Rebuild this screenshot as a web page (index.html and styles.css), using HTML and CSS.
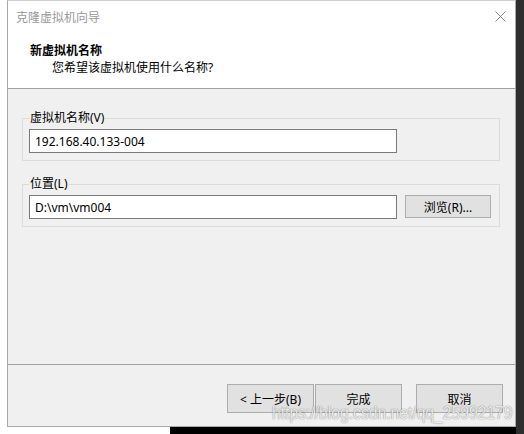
FILE: index.html
```html
<!DOCTYPE html>
<html lang="zh-CN">
<head>
    <meta charset="UTF-8">
    <meta name="viewport" content="width=device-width, initial-scale=1.0">
    <title>克隆虚拟机向导</title>
    <link rel="stylesheet" href="styles.css">
</head>
<body>
    <div class="desktop">
        <div class="edge-left"></div>
        <div class="wizard">
            <div class="titlebar">
                <span class="caption">克隆虚拟机向导</span>
                <span class="close">
                    <svg width="11" height="11" viewBox="0 0 11 11">
                        <path d="M0.5 0.5 L10.5 10.5 M10.5 0.5 L0.5 10.5" stroke="#8a8a8a" stroke-width="1" fill="none"/>
                    </svg>
                </span>
            </div>
            <div class="header">
                <div class="header-title">新虚拟机名称</div>
                <div class="header-sub">您希望该虚拟机使用什么名称?</div>
            </div>
            <div class="content">
                <fieldset class="group">
                    <legend>虚拟机名称(V)</legend>
                    <div class="row">
                        <input type="text" class="field" value="192.168.40.133-004">
                    </div>
                </fieldset>
                <fieldset class="group">
                    <legend>位置(L)</legend>
                    <div class="row">
                        <input type="text" class="field" value="D:\vm\vm004">
                        <button class="btn browse">浏览(R)...</button>
                    </div>
                </fieldset>
            </div>
            <div class="footer">
                <button class="btn nav">&lt; 上一步(B)</button>
                <button class="btn nav">完成</button>
                <button class="btn nav cancel">取消</button>
            </div>
        </div>
        <div class="edge-right"></div>
        <div class="edge-bottom"><span class="taskbar"></span></div>
        <div class="watermark">https://blog.csdn.net/qq_25992179</div>
    </div>
</body>
</html>
```

FILE: styles.css
```css
body {
    margin: 0;
    background-color: #fff;
    font-family: "Noto Sans", "Noto Sans CJK SC", sans-serif;
    font-size: 12px;
    color: #000;
}

.desktop {
    position: relative;
    display: grid;
    grid-template-columns: 7px 509px 8px;
    grid-template-rows: 427px 7px;
    width: 524px;
    height: 434px;
    overflow: hidden;
}

.edge-left {
    background-color: #fff;
}

.edge-right {
    grid-row: 1 / span 2;
    grid-column: 3;
    background-color: #2e2e2e;
}

.edge-bottom {
    grid-column: 1 / span 2;
    display: flex;
    background-color: #fff;
}

.taskbar {
    margin-left: 170px;
    flex: 1;
    background-color: #000;
}

/* wizard window */
.wizard {
    display: flex;
    flex-direction: column;
    border: 1px solid #a9a9a9;
    border-top-color: #d0d0d0;
    background-color: #f0f0f0;
}

.titlebar {
    display: flex;
    justify-content: space-between;
    align-items: center;
    height: 30px;
    padding: 0 8px 0 8px;
    background-color: #fff;
}

.caption {
    color: #999;
    padding-top: 1px;
}

.close {
    display: flex;
    margin-right: 1px;
    margin-top: 1px;
}

.header {
    height: 57px;
    padding-left: 22px;
    background-color: #fff;
    border-bottom: 1px solid #a0a0a0;
}

.header-title {
    margin-top: 11px;
    font-weight: bold;
    line-height: 17px;
}

.header-sub {
    padding-left: 22px;
    line-height: 17px;
}

.content {
    flex: 1;
    padding: 21px 15px 0 14px;
    border-bottom: 1px solid #a0a0a0;
}

.group {
    margin: 0 0 15px 0;
    padding: 3px 8px 7px 6px;
    border: 1px solid #dcdcdc;
}

.group legend {
    padding: 0 1px;
    line-height: 16px;
}

.row {
    display: flex;
    align-items: flex-start;
}

.field {
    box-sizing: border-box;
    width: 368px;
    height: 24px;
    margin: 0;
    padding: 0 5px;
    border: 1px solid #7a7a7a;
    background-color: #fff;
    font-family: inherit;
    font-size: 12px;
    color: #000;
}

.btn {
    box-sizing: border-box;
    margin: 0;
    padding: 0;
    border: 1px solid #adadad;
    background-color: #e1e1e1;
    font-family: inherit;
    font-size: 12px;
    color: #000;
}

.browse {
    width: 86px;
    height: 23px;
    margin-left: 8px;
}

.footer {
    display: flex;
    height: 61px;
    padding: 19px 12px 0 0;
    justify-content: flex-end;
    align-items: flex-start;
    box-sizing: border-box;
}

.nav {
    width: 87px;
    height: 29px;
    margin-left: 1px;
}

.cancel {
    margin-left: 14px;
}

/* blog watermark stamped over the bottom-right corner */
.watermark {
    position: absolute;
    left: 272px;
    top: 402px;
    font-family: "Liberation Sans", sans-serif;
    font-size: 19px;
    white-space: nowrap;
    transform: scaleX(0.825);
    transform-origin: left top;
    color: rgba(255, 255, 255, 0.85);
    text-shadow: 0 0 1px rgba(0, 0, 0, 0.45), 0 0 2px rgba(0, 0, 0, 0.2);
}
```
